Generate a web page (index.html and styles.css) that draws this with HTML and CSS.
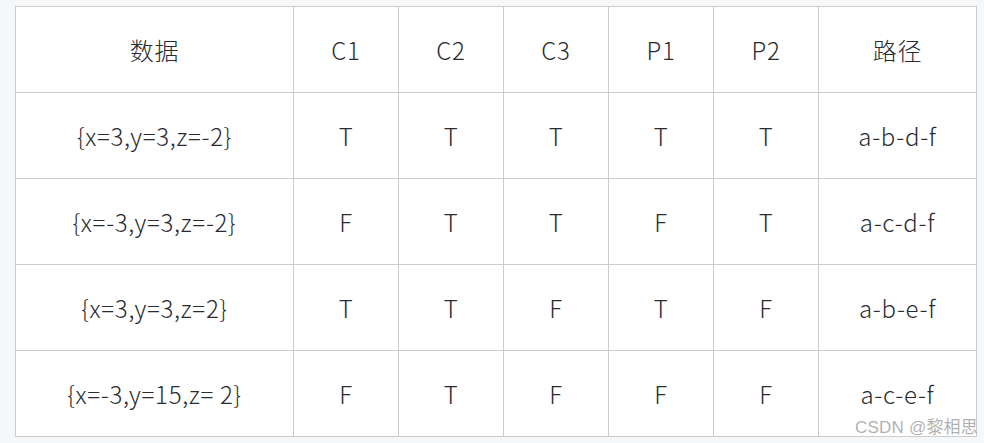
FILE: index.html
```html
<!DOCTYPE html>
<html lang="zh">
<head>
<meta charset="utf-8">
<link rel="stylesheet" href="styles.css">
</head>
<body>
<div class="wrap">
<table class="grid">
  <colgroup>
    <col class="c-data"><col class="c-n"><col class="c-n"><col class="c-n"><col class="c-n"><col class="c-n"><col class="c-path">
  </colgroup>
  <tr><td>数据</td><td>C1</td><td>C2</td><td>C3</td><td>P1</td><td>P2</td><td>路径</td></tr>
  <tr><td>{x=3,y=3,z=-2}</td><td>T</td><td>T</td><td>T</td><td>T</td><td>T</td><td>a-b-d-f</td></tr>
  <tr><td>{x=-3,y=3,z=-2}</td><td>F</td><td>T</td><td>T</td><td>F</td><td>T</td><td>a-c-d-f</td></tr>
  <tr><td>{x=3,y=3,z=2}</td><td>T</td><td>T</td><td>F</td><td>T</td><td>F</td><td>a-b-e-f</td></tr>
  <tr><td>{x=-3,y=15,z= 2}</td><td>F</td><td>T</td><td>F</td><td>F</td><td>F</td><td>a-c-e-f</td></tr>
</table>
<div class="mark">CSDN @黎相思</div>
</div>
</body>
</html>
```
FILE: styles.css
```css
html, body { margin: 0; padding: 0; background: #f6f7f9; }
body { width: 984px; height: 443px; overflow: hidden; }
.wrap { position: relative; padding: 6px 0 0 15px; }
.grid {
  border-collapse: collapse;
  table-layout: fixed;
  width: 961px;
  background: #fff;
  font-family: "Noto Sans CJK SC", "Noto Sans", sans-serif;
  font-size: 24px;
  font-weight: 300;
  letter-spacing: 0.7px;
  color: #2a2b30;
}
.c-data { width: 278px; }
.c-n { width: 105px; }
.c-path { width: 158px; }
.grid td {
  border: 1px solid #ccc;
  height: 85px;
  padding: 0;
  text-align: center;
  vertical-align: middle;
}
.mark {
  position: absolute;
  right: 6px;
  top: 413px;
  font-family: "Liberation Sans", "Noto Sans CJK SC", sans-serif;
  font-size: 17px;
  color: rgba(150,150,150,0.75);
  letter-spacing: 0.2px;
}
```
